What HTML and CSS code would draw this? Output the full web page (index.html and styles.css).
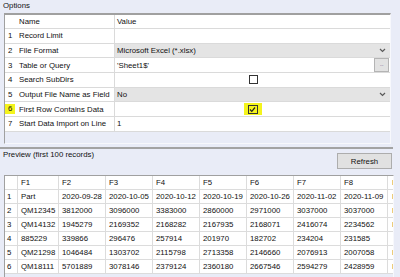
FILE: index.html
```html
<!DOCTYPE html>
<html lang="en">
<head>
    <meta charset="UTF-8">
    <meta name="viewport" content="width=device-width, initial-scale=1.0">
    <title>Import Options</title>
    <link rel="stylesheet" href="styles.css">
</head>
<body>
    <div class="caption">Options</div>
    <div class="panel options">
        <div class="prow head">
            <div class="idx"></div>
            <div class="name">Name</div>
            <div class="value">Value</div>
        </div>
        <div class="prow">
            <div class="idx">1</div>
            <div class="name">Record Limit</div>
            <div class="value"></div>
        </div>
        <div class="prow">
            <div class="idx">2</div>
            <div class="name">File Format</div>
            <div class="value combo">
                <span>Microsoft Excel (*.xlsx)</span>
                <svg class="chevron" width="7" height="5" viewBox="0 0 7 5"><polyline points="1,1 3.5,3.5 6,1" fill="none" stroke="#5a5a5a" stroke-width="1.2"/></svg>
            </div>
        </div>
        <div class="prow">
            <div class="idx">3</div>
            <div class="name">Table or Query</div>
            <div class="value browse">
                <span>'Sheet1$'</span>
                <button class="dots">...</button>
            </div>
        </div>
        <div class="prow">
            <div class="idx">4</div>
            <div class="name">Search SubDirs</div>
            <div class="value check"><span class="box"></span></div>
        </div>
        <div class="prow">
            <div class="idx">5</div>
            <div class="name">Output File Name as Field</div>
            <div class="value combo">
                <span>No</span>
                <svg class="chevron" width="7" height="5" viewBox="0 0 7 5"><polyline points="1,1 3.5,3.5 6,1" fill="none" stroke="#5a5a5a" stroke-width="1.2"/></svg>
            </div>
        </div>
        <div class="prow">
            <div class="idx"><span class="marker">6</span></div>
            <div class="name">First Row Contains Data</div>
            <div class="value check">
                <span class="marker boxmark">
                    <span class="box">
                        <svg width="7" height="7" viewBox="0 0 7 7"><polyline points="1,3.5 2.8,5.3 6,1.5" fill="none" stroke="#222" stroke-width="1.2"/></svg>
                    </span>
                </span>
            </div>
        </div>
        <div class="prow">
            <div class="idx">7</div>
            <div class="name">Start Data Import on Line</div>
            <div class="value">1</div>
        </div>
    </div>

    <div class="splitter"></div>

    <div class="preview-bar">
        <span>Preview (first 100 records)</span>
        <button class="refresh">Refresh</button>
    </div>

    <div class="panel preview">
        <div class="drow">
            <div></div><div>F1</div><div>F2</div><div>F3</div><div>F4</div><div>F5</div><div>F6</div><div>F7</div><div>F8</div><div class="cut"></div>
        </div>
        <div class="drow">
            <div>1</div><div>Part</div><div>2020-09-28</div><div>2020-10-05</div><div>2020-10-12</div><div>2020-10-19</div><div>2020-10-26</div><div>2020-11-02</div><div>2020-11-09</div><div class="cut"></div>
        </div>
        <div class="drow">
            <div>2</div><div>QM12345</div><div>3812000</div><div>3096000</div><div>3383000</div><div>2860000</div><div>2971000</div><div>3037000</div><div>3037000</div><div class="cut"></div>
        </div>
        <div class="drow">
            <div>3</div><div>QM14132</div><div>1945279</div><div>2169352</div><div>2168282</div><div>2167935</div><div>2168071</div><div>2416074</div><div>2234562</div><div class="cut"></div>
        </div>
        <div class="drow">
            <div>4</div><div>885229</div><div>339866</div><div>296476</div><div>257914</div><div>201970</div><div>182702</div><div>234204</div><div>231585</div><div class="cut blank"></div>
        </div>
        <div class="drow">
            <div>5</div><div>QM21298</div><div>1046484</div><div>1303702</div><div>2115798</div><div>2713358</div><div>2146660</div><div>2076913</div><div>2007058</div><div class="cut"></div>
        </div>
        <div class="drow">
            <div>6</div><div>QM18111</div><div>5701889</div><div>3078146</div><div>2379124</div><div>2360180</div><div>2667546</div><div>2594279</div><div>2428959</div><div class="cut"></div>
        </div>
    </div>
</body>
</html>
```

FILE: styles.css
```css
body {
    margin: 0;
    width: 400px;
    height: 277px;
    overflow: hidden;
    background-color: #e9ecf7;
    font-family: "Liberation Sans", Arial, sans-serif;
    font-size: 7.8px;
    color: #111;
}
.caption {
    height: 13px;
    line-height: 12px;
    padding-left: 3px;
}
.panel {
    margin-left: 4px;
    border-top: 2px solid #a0a0a0;
    border-left: 1px solid #a0a0a0;
    border-right: 1px solid #f7f8fc;
    border-bottom: 1px solid #f7f8fc;
    box-sizing: border-box;
}
.options {
    width: 387px;
    height: 131px;
}
.prow {
    display: grid;
    grid-template-columns: 10px 100px 1fr;
    height: 14.7px;
    background: #fff;
    border-bottom: 1px solid #dadada;
    box-sizing: border-box;
}
.prow.head {
    height: 14px;
}
.prow > div {
    display: flex;
    align-items: center;
    white-space: nowrap;
    overflow: hidden;
}
.idx {
    padding-left: 3px;
}
.name {
    padding-left: 4px;
    border-right: 1px solid #dadada;
}
.value {
    padding-left: 2px;
}
.combo {
    background: #e4e4e4;
    justify-content: space-between;
    padding-right: 4px;
}
.browse {
    justify-content: space-between;
    padding-right: 1px;
}
.dots {
    width: 15px;
    height: 14px;
    margin: 0;
    padding: 0 0 2px;
    border: 1px solid #b4b4b4;
    background: #e2e2e2;
    font-family: "Liberation Sans", Arial, sans-serif;
    font-size: 6px;
    letter-spacing: -0.5px;
    color: #7a6a9a;
    line-height: 8px;
}
.check {
    justify-content: center;
}
.box {
    display: inline-flex;
    align-items: center;
    justify-content: center;
    width: 9px;
    height: 9px;
    border: 1px solid #333;
    background: #fff;
    box-sizing: border-box;
}
.marker {
    background: #f4f41c;
}
.idx .marker {
    display: inline-block;
    width: 11px;
    height: 10px;
    line-height: 10px;
    margin-left: -3px;
    padding-left: 3px;
    box-sizing: border-box;
}
.boxmark {
    display: inline-flex;
    align-items: center;
    justify-content: center;
    width: 18px;
    height: 12px;
    margin-left: -2px;
}
.boxmark .box {
    width: 10px;
    background: transparent;
}
.splitter {
    width: 393px;
    height: 2px;
    margin-top: 3px;
    background: #a3a3a3;
}
.preview-bar {
    display: flex;
    justify-content: space-between;
    align-items: flex-start;
    height: 26px;
    padding: 1px 8px 0 3px;
    box-sizing: border-box;
}
.preview-bar span {
    line-height: 10px;
}
.refresh {
    margin-top: 3px;
    width: 55px;
    height: 16px;
    padding: 0;
    border: 1px solid #adadad;
    background: #e1e1e1;
    font-family: "Liberation Sans", Arial, sans-serif;
    font-size: 7.8px;
    color: #111;
}
.preview {
    width: 390px;
    height: 110px;
    border-top: 1px solid #a0a0a0;
}
.drow {
    display: grid;
    grid-template-columns: 13px 41px repeat(7, 47px) 5px;
    height: 14px;
    background: #fff;
}
.drow > div {
    border-right: 1px solid #dcdcdc;
    border-bottom: 1px solid #dcdcdc;
    padding-left: 3px;
    line-height: 13px;
    white-space: nowrap;
    overflow: hidden;
    box-sizing: border-box;
}
.drow > div:first-child {
    padding-left: 2px;
}
.drow > .cut {
    border-right: none;
    padding: 0;
}
.cut::before {
    content: "";
    display: block;
    width: 1px;
    height: 5px;
    margin: 4px 0 0 4px;
    background: #edcc7a;
}
.cut.blank::before {
    display: none;
}
```
